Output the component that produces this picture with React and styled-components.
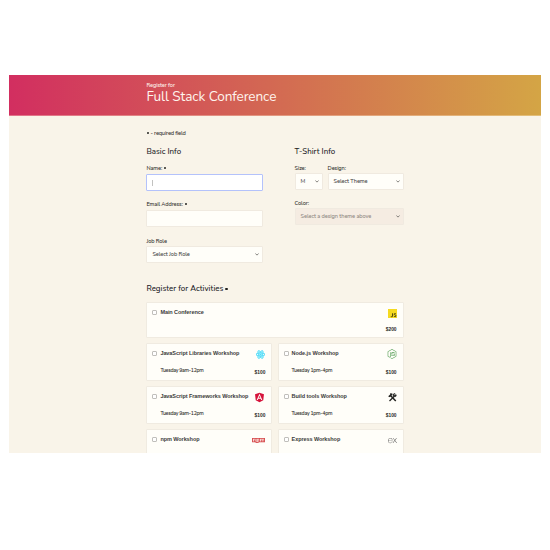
import React from "react";
import styled, { createGlobalStyle } from "styled-components";
import { FaReact, FaNodeJs, FaAngular } from "react-icons/fa";
import { SiExpress } from "react-icons/si";

const GlobalStyle = createGlobalStyle`
  * { box-sizing: border-box; }
  body { margin: 0; background: #fff; }
`;

const Page = styled.main`
  width: 532px;
  height: 378px;
  margin: 75px 0 0 9px;
  overflow: hidden;
  background: #f9f4e9;
  color: #2b2b28;
  font-family: Nunito, "Noto Sans", sans-serif;
  font-size: 5.6px;
`;

const Header = styled.header`
  height: 41px;
  padding: 7px 0 0 137.4px;
  background: linear-gradient(90deg, #d22e60, #d4a545);
  border-bottom: 1px solid rgba(255, 240, 215, 0.35);
  color: #fff5ee;
`;

const Overline = styled.div`
  height: 7px;
  line-height: 7px;
  font-size: 5.6px;
  font-weight: 500;
  letter-spacing: -0.08px;
`;

const Title = styled.h1`
  margin: 0;
  font-size: 13.6px;
  line-height: 16px;
  font-weight: 400;
  letter-spacing: -0.1px;
  white-space: nowrap;
`;

const Form = styled.form`
  width: 257.2px;
  margin-left: 137.4px;
  padding-top: 13px;
`;

const Note = styled.p`
  margin: 0;
  height: 8px;
  line-height: 8px;
  font-weight: 500;
  letter-spacing: -0.15px;
`;

const Columns = styled.div`
  display: grid;
  grid-template-columns: 117px 109px;
  justify-content: space-between;
  margin-top: 9px;
`;

const Heading = styled.h2`
  margin: 0;
  height: 12px;
  line-height: 12px;
  font-size: 7.9px;
  font-weight: 500;
  color: #20201e;
  letter-spacing: 0.02px;
  white-space: nowrap;
`;

const Group = styled.div`
  margin-top: ${(p) => p.$top}px;
`;

const Label = styled.label`
  display: block;
  height: 8px;
  line-height: 8px;
  margin-bottom: ${(p) => p.$gap}px;
  font-weight: 500;
  letter-spacing: -0.1px;
  white-space: nowrap;
`;

const Star = styled.span`
  display: inline-block;
  width: ${(p) => p.$size || 1.8}px;
  height: ${(p) => p.$size || 1.8}px;
  border-radius: 50%;
  margin: 0 ${(p) => (p.$size ? 0 : 0.5)}px;
  background: currentColor;
  vertical-align: 1px;
`;

const Field = styled.div`
  display: flex;
  align-items: center;
  height: 17px;
  padding-left: 5px;
  border: 1px solid ${(p) => (p.$focused ? "#b4c2fb" : "#f0eae0")};
  border-radius: 1px;
  background: ${(p) => (p.$focused ? "#fff" : "#fffef9")};
`;

const Caret = styled.span`
  width: 1px;
  height: 6px;
  background: #c2c2c0;
`;

const Select = styled(Field)`
  justify-content: space-between;
  padding: 0 3px 1px 5px;
  color: ${(p) => (p.$disabled ? "#8c8580" : "#3c3c39")};
  background: ${(p) => (p.$disabled ? "#f5ece2" : "#fffef9")};
  font-weight: 500;
  letter-spacing: -0.07px;
  line-height: 8px;
  white-space: nowrap;
`;

const SizeRow = styled.div`
  display: grid;
  grid-template-columns: 28px 76px;
  justify-content: space-between;
  margin-top: 6px;
`;

const Activities = styled.section`
  display: grid;
  grid-template-columns: 126px 126px;
  justify-content: space-between;
  row-gap: 5px;
  margin-top: 7px;
`;

const Card = styled.article`
  display: grid;
  grid-template-columns: 5px 1fr 13px;
  grid-template-rows: 10px 1fr;
  column-gap: 3px;
  grid-column: ${(p) => (p.$wide ? "1 / -1" : "auto")};
  height: ${(p) => (p.$wide ? 36 : 38)}px;
  padding: 4px 6px 0 5px;
  border: 1px solid #f0ebe1;
  border-radius: 1px;
  background: #fffef9;
  font-family: "Liberation Sans", Arial, sans-serif;
`;

const Checkbox = styled.span`
  width: 5px;
  height: 5px;
  align-self: center;
  border: 1px solid #c0bfbb;
  border-radius: 1px;
  background: #fff;
`;

const Name = styled.strong`
  align-self: center;
  min-width: 0;
  font-size: 5.5px;
  line-height: 8px;
  color: #3b3b39;
  letter-spacing: -0.07px;
  white-space: nowrap;
`;

const Logo = styled.span`
  display: flex;
  align-items: center;
  justify-content: flex-end;
  height: 12px;
`;

const Time = styled.span`
  grid-column: 2;
  padding-top: 9px;
  font-family: Nunito, "Noto Sans", sans-serif;
  font-size: 5.2px;
  font-weight: 600;
  line-height: 8px;
  letter-spacing: -0.26px;
  white-space: nowrap;
`;

const Price = styled.span`
  grid-column: 3;
  padding-top: ${(p) => p.$top}px;
  font-size: 4.9px;
  font-weight: 600;
  line-height: 8px;
  text-align: right;
`;

const Chevron = () => (
  <svg width="4" height="3" viewBox="0 0 4 3" fill="none" stroke="#65635f" strokeWidth="0.8">
    <path d="M0.4 0.6 2 2.1 3.6 0.6" />
  </svg>
);

const JsLogo = () => (
  <svg width="9" height="9" viewBox="0 0 18 18" fill="none">
    <path fill="#f5da20" d="M0 0h18v18H0z" />
    <path
      stroke="#3c370f"
      strokeWidth="1.9"
      d="M9.2 8.5v5.7c0 1.8-2.7 1.9-3.4.2M15.8 10c-.8-1.5-3.5-1.2-3.3.5.2 1.7 3.6 1.2 3.6 3.3 0 2-3.3 2.1-4.2.2"
    />
  </svg>
);

const Tools = () => (
  <svg width="9" height="9" viewBox="0 0 18 18" fill="none" stroke="#242422">
    <path d="M3 16 12.5 6.5" strokeWidth="2.6" />
    <path d="M16 2.5 13.5 5 12 3.5 14 1C11 .7 9.5 3 10.5 6 12 8 15.5 7.7 17 5.5" fill="#242422" strokeWidth="1.2" />
    <path d="M6 6 15.5 16" strokeWidth="3" />
    <path d="M1.5 7.5 7 2.5 4.5 1.5M3 6.5 7.5 5" strokeWidth="3.2" />
  </svg>
);

const Npm = () => (
  <svg width="13" height="5" viewBox="0 0 18 7">
    <path fill="#d44043" d="M0 0h18v6H9v1H5V6H0z" />
    <path
      fill="#f8d5d1"
      d="M1.2 1.2H5V5H4V2.2H3V5H1.2zM6 1.2h4V5H8v1H6zM8 2.2V4h1V2.2zM11 1.2h5.8V5H16V2.2h-1V5h-1V2.2h-1V5h-2z"
    />
  </svg>
);

const activities = [
  { name: "JavaScript Libraries Workshop", time: "Tuesday 9am-12pm", price: "$100", icon: <FaReact size={9} color="#4fdcfa" stroke="#4fdcfa" strokeWidth={30} /> },
  { name: "Node.js Workshop", time: "Tuesday 1pm-4pm", price: "$100", icon: <FaNodeJs size={10} color="#5fa35f" /> },
  { name: "JavaScript Frameworks Workshop", time: "Tuesday 9am-12pm", price: "$100", icon: <FaAngular size={11} color="#d6133b" /> },
  { name: "Build tools Workshop", time: "Tuesday 1pm-4pm", price: "$100", icon: <Tools /> },
  { name: "npm Workshop", icon: <Npm /> },
  { name: "Express Workshop", icon: <SiExpress size={9} color="#444" /> },
];

export default function App() {
  return (
    <>
      <GlobalStyle />
      <Page>
        <Header>
          <Overline>Register for</Overline>
          <Title>Full Stack Conference</Title>
        </Header>
        <Form>
          <Note><Star /> - required field</Note>
          <Columns>
            <section>
              <Heading>Basic Info</Heading>
              <Group $top={6}>
                <Label $gap={2}>Name: <Star /></Label>
                <Field $focused><Caret /></Field>
              </Group>
              <Group $top={9}>
                <Label $gap={2}>Email Address: <Star /></Label>
                <Field />
              </Group>
              <Group $top={10}>
                <Label $gap={1}>Job Role</Label>
                <Select>Select Job Role<Chevron /></Select>
              </Group>
            </section>
            <section>
              <Heading>T-Shirt Info</Heading>
              <SizeRow>
                <div>
                  <Label $gap={1}>Size:</Label>
                  <Select>M<Chevron /></Select>
                </div>
                <div>
                  <Label $gap={1}>Design:</Label>
                  <Select>Select Theme<Chevron /></Select>
                </div>
              </SizeRow>
              <Group $top={9}>
                <Label $gap={1}>Color:</Label>
                <Select $disabled>Select a design theme above<Chevron /></Select>
              </Group>
            </section>
          </Columns>
          <Group $top={20}>
            <Heading>Register for Activities <Star $size={2.5} /></Heading>
          </Group>
          <Activities>
            <Card $wide>
              <Checkbox />
              <Name>Main Conference</Name>
              <Logo><JsLogo /></Logo>
              <Price $top={9}>$200</Price>
            </Card>
            {activities.map((item) => (
              <Card key={item.name}>
                <Checkbox />
                <Name>{item.name}</Name>
                <Logo>{item.icon}</Logo>
                {item.time && <Time>{item.time}</Time>}
                {item.price && <Price $top={11}>{item.price}</Price>}
              </Card>
            ))}
          </Activities>
        </Form>
      </Page>
    </>
  );
}
